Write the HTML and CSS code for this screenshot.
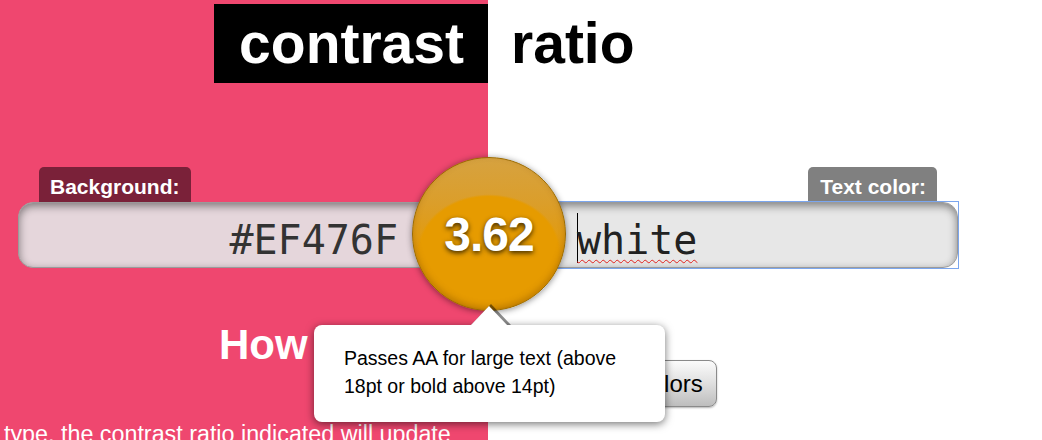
FILE: index.html
```html
<!DOCTYPE html>
<html lang="en">
<head>
<meta charset="utf-8">
<title>Contrast Ratio</title>
<link rel="stylesheet" href="styles.css">
</head>
<body>
<h1 class="title">
  <span class="title-left"><span class="title-box">contrast</span></span>
  <span class="title-right">ratio</span>
</h1>

<main class="tool">
  <div class="field field-bg">
    <label class="field-label">Background:</label>
    <div class="field-input">#EF476F</div>
  </div>
  <div class="field field-fg">
    <label class="field-label">Text color:</label>
    <div class="field-focus">
      <div class="field-input"><span class="caret"></span><span class="misspelled">white</span></div>
    </div>
  </div>
  <div class="ratio">3.62</div>
  <div class="tooltip">Passes AA for large text (above 18pt or bold above 14pt)</div>
</main>

<section class="lower">
  <div class="lower-left">
    <h2 class="lower-heading">How to use</h2>
    <p class="lower-text">type, the contrast ratio indicated will update</p>
  </div>
  <div class="lower-right">
    <button class="swap">Swap colors</button>
  </div>
</section>
</body>
</html>
```

FILE: styles.css
```css
html, body {
  margin: 0;
  padding: 0;
}

body {
  font-family: "Liberation Sans", Arial, sans-serif;
  background: linear-gradient(90deg, #EF476F 0, #EF476F 488px, #ffffff 488px);
  height: 440px;
  overflow: hidden;
}

/* Title */
.title {
  display: grid;
  grid-template-columns: 488px 1fr;
  margin: 4px 0 0;
  font-size: 57px;
  font-weight: 700;
  line-height: 79px;
  height: 79px;
}

.title-left {
  display: flex;
  justify-content: flex-end;
}

.title-box {
  background: #000;
  color: #fff;
  padding: 0 24px 0 25px;
}

.title-right {
  color: #000;
  padding-left: 23px;
}

/* Tool */
.tool {
  position: relative;
  display: grid;
  grid-template-columns: 470px 470px;
  padding-left: 18px;
  margin-top: 84px;
}

.field {
  display: flex;
  flex-direction: column;
}

.field-bg {
  align-items: flex-start;
}

.field-fg {
  align-items: flex-end;
}

.field-label {
  display: block;
  font-size: 21px;
  font-weight: 700;
  color: #fff;
  line-height: 24px;
  padding: 8px 11px 9px;
  margin: 0 21px -6px;
  border-radius: 5px 5px 0 0;
}

.field-bg .field-label {
  background: #7A2139;
}

.field-fg .field-label {
  background: #808080;
  padding-left: 12px;
  padding-right: 11px;
}

.field-input {
  position: relative;
  box-sizing: border-box;
  width: 470px;
  height: 66px;
  border: 1px solid #9a9a9a;
  border-radius: 15px;
  font-family: "DejaVu Sans Mono", monospace;
  font-size: 40px;
  line-height: 54px;
  padding-top: 10px;
  box-shadow: inset 0 3px 9px rgba(0, 0, 0, 0.45);
  align-self: stretch;
}

.field-bg .field-input {
  background: #E5D6DB;
  color: #333;
  text-align: right;
  padding-right: 89px;
}

.field-focus {
  align-self: stretch;
  outline: 1px solid #7BA6EE;
  position: relative;
  z-index: 1;
}

.field-fg .field-input {
  background: #E7E7E7;
  color: #222;
  padding-left: 88px;
}

.caret {
  display: inline-block;
  width: 1px;
  height: 50px;
  background: #000;
  vertical-align: -9px;
  margin-right: -1px;
}

.misspelled {
  text-decoration: underline wavy #e0201c;
  text-decoration-thickness: 1px;
  text-underline-offset: 5px;
}

.ratio {
  position: absolute;
  z-index: 3;
  left: 412px;
  top: -10px;
  width: 154px;
  height: 154px;
  box-sizing: border-box;
  border-radius: 50%;
  border: 1px solid #9a6a00;
  background:
    radial-gradient(ellipse 72px 58px at 50% 62%, #E69B00 0, #E69B00 96%, rgba(230, 155, 0, 0) 100%),
    linear-gradient(#D6A240, #DB9E2A 30%, #E39A08 60%, #D68E00);
  box-shadow: 0 1px 6px rgba(0, 0, 0, 0.45), inset 0 -3px 6px rgba(120, 70, 0, 0.35);
  display: flex;
  align-items: center;
  justify-content: center;
  color: #fff;
  font-weight: 700;
  font-size: 48px;
  letter-spacing: -1px;
  text-shadow: 0 2px 5px rgba(0, 0, 0, 0.75);
}

.tooltip {
  position: absolute;
  z-index: 4;
  left: 314px;
  top: 158px;
  box-sizing: border-box;
  width: 351px;
  height: 97px;
  padding: 19px 28px 0 30px;
  background: #fff;
  border-radius: 8px;
  box-shadow: 0 2px 8px rgba(0, 0, 0, 0.55);
  color: #000;
  font-size: 19.5px;
  line-height: 28px;
}

.tooltip::before,
.tooltip::after {
  content: "";
  position: absolute;
  left: 50%;
  width: 0;
  height: 0;
  border-style: solid;
}

.tooltip::before {
  top: -21px;
  margin-left: -19px;
  border-width: 0 20px 21px 20px;
  border-color: transparent transparent rgba(0, 0, 0, 0.45) transparent;
}

.tooltip::after {
  top: -19px;
  margin-left: -20px;
  border-width: 0 19px 20px 19px;
  border-color: transparent transparent #fff transparent;
}

/* Lower section */
.lower {
  display: grid;
  grid-template-columns: 488px 1fr;
}

.lower-heading {
  margin: 52px 0 0;
  padding-left: 219px;
  color: #fff;
  font-size: 42px;
  font-weight: 700;
  line-height: 50px;
  white-space: nowrap;
}

.lower-text {
  margin: 49px 0 0;
  padding-left: 4px;
  color: #fff;
  font-size: 23.3px;
  line-height: 30px;
  white-space: nowrap;
}

.lower-right {
  display: flex;
  align-items: flex-start;
}

.swap {
  margin: 92px 0 0 70px;
  font-family: "Liberation Sans", Arial, sans-serif;
  font-size: 24px;
  line-height: 29px;
  padding: 8px 13px;
  color: #000;
  border: 1px solid #8a8a8a;
  border-radius: 8px;
  background: linear-gradient(#fbfbfb, #e2e2e2 45%, #bdbdbd);
  box-shadow: 0 1px 2px rgba(0, 0, 0, 0.3);
}
```
